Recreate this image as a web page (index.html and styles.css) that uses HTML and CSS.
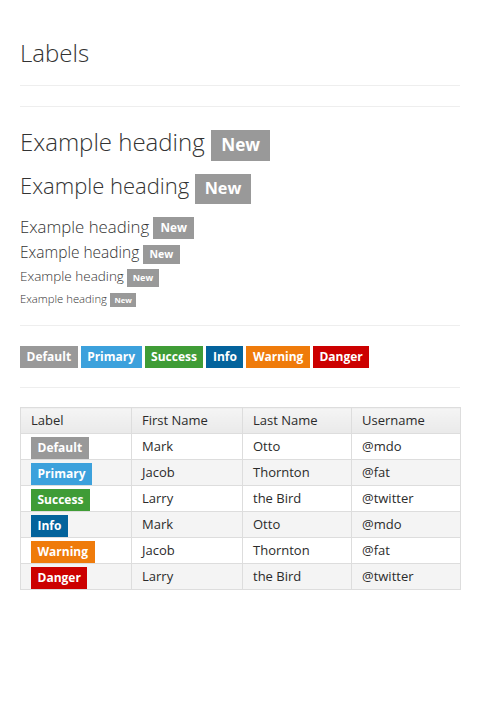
FILE: index.html
```html
<!DOCTYPE html>
<html>
<head>
<meta charset="utf-8">
<link rel="stylesheet" href="styles.css">
</head>
<body>
<div class="page">
  <h1 class="title">Labels</h1>
  <hr class="rule">
  <hr class="rule">
  <div class="headings">
    <div class="h h1">Example heading <span class="badge">New</span></div>
    <div class="h h2">Example heading <span class="badge">New</span></div>
    <div class="h h3">Example heading <span class="badge">New</span></div>
    <div class="h h4">Example heading <span class="badge">New</span></div>
    <div class="h h5">Example heading <span class="badge">New</span></div>
    <div class="h h6">Example heading <span class="badge">New</span></div>
  </div>
  <hr class="rule">
  <div class="labels">
    <span class="label l-default">Default</span>
    <span class="label l-primary">Primary</span>
    <span class="label l-success">Success</span>
    <span class="label l-info">Info</span>
    <span class="label l-warning">Warning</span>
    <span class="label l-danger">Danger</span>
  </div>
  <hr class="rule rule-tight">
  <table class="table">
    <colgroup><col class="c1"><col class="c2"><col class="c3"><col class="c4"></colgroup>
    <thead>
      <tr><th>Label</th><th>First Name</th><th>Last Name</th><th>Username</th></tr>
    </thead>
    <tbody>
      <tr><td><span class="label l-default">Default</span></td><td>Mark</td><td>Otto</td><td>@mdo</td></tr>
      <tr><td><span class="label l-primary">Primary</span></td><td>Jacob</td><td>Thornton</td><td>@fat</td></tr>
      <tr><td><span class="label l-success">Success</span></td><td>Larry</td><td>the Bird</td><td>@twitter</td></tr>
      <tr><td><span class="label l-info">Info</span></td><td>Mark</td><td>Otto</td><td>@mdo</td></tr>
      <tr><td><span class="label l-warning">Warning</span></td><td>Jacob</td><td>Thornton</td><td>@fat</td></tr>
      <tr><td><span class="label l-danger">Danger</span></td><td>Larry</td><td>the Bird</td><td>@twitter</td></tr>
    </tbody>
  </table>
</div>
</body>
</html>
```
FILE: styles.css
```css
html, body { margin: 0; padding: 0; background: #fff; }
body { font-family: "Open Sans", "DejaVu Sans", sans-serif; color: #333; font-size: 13px; }
.page { padding: 20px; }
.title { font-weight: 300; font-size: 24px; margin: 18px 0 0 0; line-height: 30px; }
.rule { border: 0; border-top: 1px solid #eee; margin: 20px 0; }
.title + .rule { margin-top: 17px; }
.rule-tight { margin: 19px 0 19px; }
.h { font-weight: 300; line-height: 1.1; margin: 0; }
.h1 { font-size: 24px; margin-top: 22px; }
.h2 { font-size: 22px; margin-top: 18px; }
.h3 { font-size: 16.8px; margin-top: 20px; }
.h4 { font-size: 15.5px; margin-top: 8px; }
.h5 { font-size: 13.5px; margin-top: 8px; }
.h6 { font-size: 11.3px; margin-top: 9px; }
.badge { display: inline; font-weight: 700; color: #fff; background: #999; padding: .2em .6em .3em; line-height: 1; }
.h1 .badge { font-size: 17.2px; }
.h2 .badge { font-size: 16.2px; }
.h3 .badge { font-size: 11.7px; }
.h4 .badge { font-size: 10.5px; }
.h5 .badge { font-size: 9px; }
.h6 .badge { font-size: 7.7px; }
.label { display: inline-block; font-weight: 700; color: #fff; font-size: 12px; padding: 5px 6.5px; line-height: 12px; }
.labels { display: flex; gap: 3px; }
.l-default { background: #999; }
.l-primary { background: #3ca1dc; }
.l-success { background: #3f9c36; }
.l-info { background: #03639c; }
.l-warning { background: #ef7b0b; }
.l-danger { background: #cc0000; }
.table { width: 100%; table-layout: fixed; border-collapse: collapse; border: 1px solid #ddd; }
.c1, .c2 { width: 111px; }
.c3, .c4 { width: 109px; }
.table th, .table td { border: 1px solid #ddd; padding: 0 10px; height: 25px; text-align: left; font-size: 13px; line-height: 25px; vertical-align: middle; color: #2b2b2b; }
.table th { font-weight: 400; background: linear-gradient(#f5f5f5, #e9e9e9); }
.table tbody tr:nth-child(even) { background: #f4f4f4; }
.table td .label { vertical-align: middle; color: #fff; }
```
